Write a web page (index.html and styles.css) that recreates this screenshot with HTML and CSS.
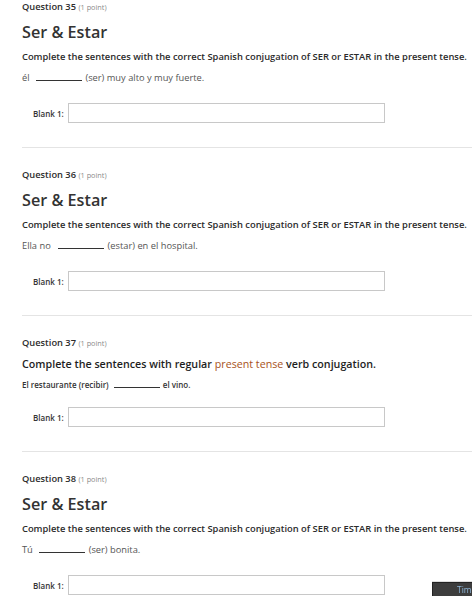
FILE: index.html
```html
<!DOCTYPE html>
<html>
<head>
<meta charset="utf-8">
<link rel="stylesheet" href="styles.css">
</head>
<body>
<div class="quiz">
  <div class="question">
    <div class="qhead">Question 35 <span class="pts">(1 point)</span></div>
    <h2 class="title">Ser &amp; Estar</h2>
    <p class="instr">Complete the sentences with the correct Spanish conjugation of SER or ESTAR in the present tense.</p>
    <p class="sent">él <span class="gap g1"></span> (ser) muy alto y muy fuerte.</p>
    <div class="blank"><label>Blank 1:</label><span class="input"></span></div>
  </div>
  <div class="question">
    <div class="qhead">Question 36 <span class="pts">(1 point)</span></div>
    <h2 class="title">Ser &amp; Estar</h2>
    <p class="instr">Complete the sentences with the correct Spanish conjugation of SER or ESTAR in the present tense.</p>
    <p class="sent">Ella no <span class="gap g2"></span> (estar) en el hospital.</p>
    <div class="blank"><label>Blank 1:</label><span class="input"></span></div>
  </div>
  <div class="question">
    <div class="qhead">Question 37 <span class="pts">(1 point)</span></div>
    <p class="instr2">Complete the sentences with regular <span class="hl">present tense</span> verb conjugation.</p>
    <p class="sent2">El restaurante (recibir) <span class="gap g3"></span> el vino.</p>
    <div class="blank b2"><label>Blank 1:</label><span class="input"></span></div>
  </div>
  <div class="question">
    <div class="qhead">Question 38 <span class="pts">(1 point)</span></div>
    <h2 class="title">Ser &amp; Estar</h2>
    <p class="instr">Complete the sentences with the correct Spanish conjugation of SER or ESTAR in the present tense.</p>
    <p class="sent">Tú <span class="gap g4"></span> (ser) bonita.</p>
    <div class="blank"><label>Blank 1:</label><span class="input"></span></div>
  </div>
</div>
<div class="timer">Time Remaining</div>
</body>
</html>
```
FILE: styles.css
```css
html, body {
  margin: 0;
  padding: 0;
  background: #fff;
}
body {
  font-family: "Open Sans", "DejaVu Sans", sans-serif;
  color: #333;
  overflow: hidden;
  width: 472px;
  height: 596px;
}
.quiz {
  padding-left: 22px;
}
.question {
  border-bottom: 1px solid #e4e4e4;
  padding-bottom: 24px;
  margin-bottom: 20px;
}
.qhead {
  font-size: 9.3px;
  font-weight: 600;
  line-height: 14px;
  height: 14px;
  color: #2d2d2d;
  white-space: nowrap;
}
.pts {
  font-size: 7.3px;
  font-weight: 400;
  color: #8a8a8a;
}
.title {
  margin: 7px 0 0;
  font-size: 16.2px;
  font-weight: 600;
  line-height: 22px;
  color: #333;
}
.instr {
  margin: 7px 0 0;
  font-size: 9.35px;
  font-weight: 600;
  line-height: 14px;
  color: #2b2b2b;
  white-space: nowrap;
}
.sent {
  margin: 7px 0 0;
  font-size: 9.3px;
  line-height: 14px;
  color: #555;
  white-space: nowrap;
}
.instr2 {
  margin: 6px 0 0;
  font-size: 10.7px;
  font-weight: 600;
  line-height: 16px;
  color: #1e1e1e;
  white-space: nowrap;
}
.hl {
  color: #a8521c;
  font-weight: 400;
}
.sent2 {
  margin: 7px 0 0;
  font-size: 8px;
  font-weight: 600;
  line-height: 12px;
  color: #333;
  white-space: nowrap;
}
.gap {
  display: inline-block;
  width: 46px;
  height: 8px;
  border-bottom: 1px solid #333;
  vertical-align: baseline;
  margin: 0 1px 0 4px;
}
.g2 { margin-left: 5px; }
.g3 { margin-left: 3px; }
.blank {
  display: flex;
  align-items: center;
  margin-top: 18px;
  padding-left: 11px;
  height: 20px;
}
.b2 { margin-top: 16px; }
.blank label {
  font-size: 8px;
  font-weight: 600;
  color: #333;
  width: 35px;
  white-space: nowrap;
}
.input {
  display: block;
  width: 315px;
  height: 18px;
  border: 1px solid #c8c8c8;
  background: #fff;
}
.timer {
  position: fixed;
  left: 432px;
  top: 582px;
  width: 80px;
  height: 20px;
  background: #3d3d3d;
  border-top: 1px solid #222;
  border-left: 1px solid #222;
  box-shadow: 0 -1px 0 #ddd;
  color: #8fb6d8;
  font-size: 8.5px;
  line-height: 14px;
  padding-left: 24px;
  white-space: nowrap;
}
```
